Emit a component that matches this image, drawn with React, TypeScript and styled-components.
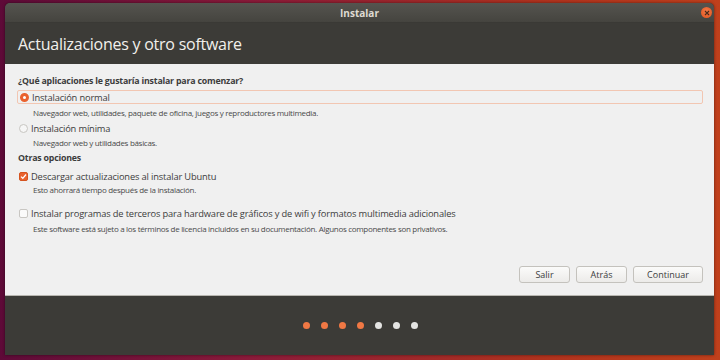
import styled, { createGlobalStyle } from "styled-components";

const Global = createGlobalStyle`
  html, body {
    margin: 0;
    padding: 0;
  }
  body {
    width: 720px;
    height: 360px;
    overflow: hidden;
    font-family: "Open Sans", "Noto Sans", sans-serif;
    background: linear-gradient(90deg, #5e0a38 0%, #8a1a3a 35%, #b0321e 75%, #c0401c 100%);
  }
`;

const Desktop = styled.div`
  width: 720px;
  height: 360px;
  padding: 3px 6px 5px 5px;
  box-sizing: border-box;
  display: flex;
`;

const Window = styled.div`
  flex: 1;
  display: flex;
  flex-direction: column;
  border-radius: 5px 5px 0 0;
  overflow: hidden;
  background: #3c3b37;
  box-shadow: 0 0 3px rgba(0, 0, 0, 0.5);
`;

const TitleBar = styled.div`
  height: 19px;
  flex: none;
  display: flex;
  align-items: center;
  justify-content: center;
  position: relative;
  background: linear-gradient(#55544f, #45443f);
  border-bottom: 1px solid #3a3935;
  color: #dfdbd2;
  font-size: 10px;
  font-weight: 700;
`;

const CloseButton = styled.div`
  position: absolute;
  right: 2px;
  top: 4px;
  width: 11px;
  height: 11px;
  border-radius: 50%;
  background: radial-gradient(circle at 50% 40%, #f47a48, #e0521c);
  display: flex;
  align-items: center;
  justify-content: center;
`;

const Header = styled.div`
  height: 41px;
  flex: none;
  display: flex;
  align-items: center;
  padding-left: 13px;
  color: #f2f0ec;
  font-size: 16px;
  letter-spacing: -0.25px;
`;

const Content = styled.div`
  height: 232px;
  flex: none;
  background: #f0f0f0;
  border-bottom: 1px solid #b8b6b0;
  padding: 10px 11px 0 13px;
  box-sizing: border-box;
  display: flex;
  flex-direction: column;
  color: #3c3c3c;
`;

const SectionTitle = styled.div<{ $mt?: number }>`
  margin-top: ${(p) => p.$mt ?? 0}px;
  font-size: 8.8px;
  font-weight: 700;
  line-height: 14px;
  letter-spacing: -0.2px;
  color: #3c3c3c;
`;

const OptionRow = styled.div<{ $focused?: boolean; $mt: number }>`
  display: flex;
  align-items: center;
  gap: 3px;
  height: 14px;
  box-sizing: border-box;
  margin: ${(p) => p.$mt}px 0 0 ${(p) => (p.$focused ? -1 : 0)}px;
  padding-left: ${(p) => (p.$focused ? "2px" : "1px")};
  border: ${(p) => (p.$focused ? "1px solid #f2c6b2" : "none")};
  border-radius: 2px;
  font-size: 9.3px;
  letter-spacing: -0.15px;
  color: #3c3c3c;
`;

const Radio = styled.span<{ $on?: boolean }>`
  width: 9px;
  height: 9px;
  border-radius: 50%;
  box-sizing: border-box;
  flex: none;
  background: ${(p) => (p.$on ? "#ffffff" : "#f6f6f6")};
  border: ${(p) => (p.$on ? "3px solid #e9622f" : "1px solid #c8c6c2")};
`;

const Check = styled.span<{ $on?: boolean }>`
  width: 9px;
  height: 9px;
  border-radius: 2px;
  box-sizing: border-box;
  flex: none;
  display: flex;
  align-items: center;
  justify-content: center;
  background: ${(p) => (p.$on ? "#e9622f" : "#fafafa")};
  border: 1px solid ${(p) => (p.$on ? "#d5531f" : "#c8c6c2")};
`;

const Description = styled.div<{ $mt: number }>`
  font-size: 8px;
  line-height: 12px;
  letter-spacing: -0.3px;
  padding-left: 15px;
  margin-top: ${(p) => p.$mt}px;
  color: #4a4a4a;
`;

const Spacer = styled.div`
  flex: 1;
`;

const ButtonBar = styled.div`
  display: flex;
  justify-content: flex-end;
  gap: 6px;
  padding: 0 0 12px 0;
`;

const Button = styled.button<{ $w: number }>`
  width: ${(p) => p.$w}px;
  height: 17px;
  padding: 0;
  border: 1px solid #c4c2bd;
  border-radius: 3px;
  background: linear-gradient(#fbfbfa, #ecebe9);
  font-family: inherit;
  font-size: 9px;
  color: #3c3c3c;
`;

const Footer = styled.div`
  flex: 1;
  display: flex;
  align-items: center;
  justify-content: center;
  gap: 11px;
  padding-left: 1px;
`;

const Dot = styled.span<{ $done?: boolean }>`
  width: 7px;
  height: 7px;
  border-radius: 50%;
  background: ${(p) => (p.$done ? "#f07844" : "#e4e4e2")};
`;

const steps = [true, true, true, true, false, false, false];

export default function App() {
  return (
    <>
      <Global />
      <Desktop>
        <Window>
          <TitleBar>
            Instalar
            <CloseButton>
              <svg width="6" height="6" viewBox="0 0 6 6">
                <path d="M1 1 L5 5 M5 1 L1 5" stroke="#4a2a1a" strokeWidth="1.1" />
              </svg>
            </CloseButton>
          </TitleBar>
          <Header>Actualizaciones y otro software</Header>
          <Content>
            <SectionTitle>¿Qué aplicaciones le gustaría instalar para comenzar?</SectionTitle>
            <OptionRow $focused $mt={2}>
              <Radio $on />
              Instalación normal
            </OptionRow>
            <Description $mt={3}>
              Navegador web, utilidades, paquete de oficina, juegos y reproductores multimedia.
            </Description>
            <OptionRow $mt={2}>
              <Radio />
              Instalación mínima
            </OptionRow>
            <Description $mt={2}>Navegador web y utilidades básicas.</Description>
            <SectionTitle $mt={2}>Otras opciones</SectionTitle>
            <OptionRow $mt={4}>
              <Check $on>
                <svg width="7" height="7" viewBox="0 0 7 7">
                  <path d="M1 3.6 L2.8 5.3 L6 1.5" stroke="#fff" strokeWidth="1.3" fill="none" />
                </svg>
              </Check>
              Descargar actualizaciones al instalar Ubuntu
            </OptionRow>
            <Description $mt={1}>Esto ahorrará tiempo después de la instalación.</Description>
            <OptionRow $mt={10}>
              <Check />
              Instalar programas de terceros para hardware de gráficos y de wifi y formatos multimedia adicionales
            </OptionRow>
            <Description $mt={3}>
              Este software está sujeto a los términos de licencia incluidos en su documentación. Algunos componentes son privativos.
            </Description>
            <Spacer />
            <ButtonBar>
              <Button $w={51}>Salir</Button>
              <Button $w={51}>Atrás</Button>
              <Button $w={70}>Continuar</Button>
            </ButtonBar>
          </Content>
          <Footer>
            {steps.map((done, i) => (
              <Dot key={i} $done={done} />
            ))}
          </Footer>
        </Window>
      </Desktop>
    </>
  );
}
